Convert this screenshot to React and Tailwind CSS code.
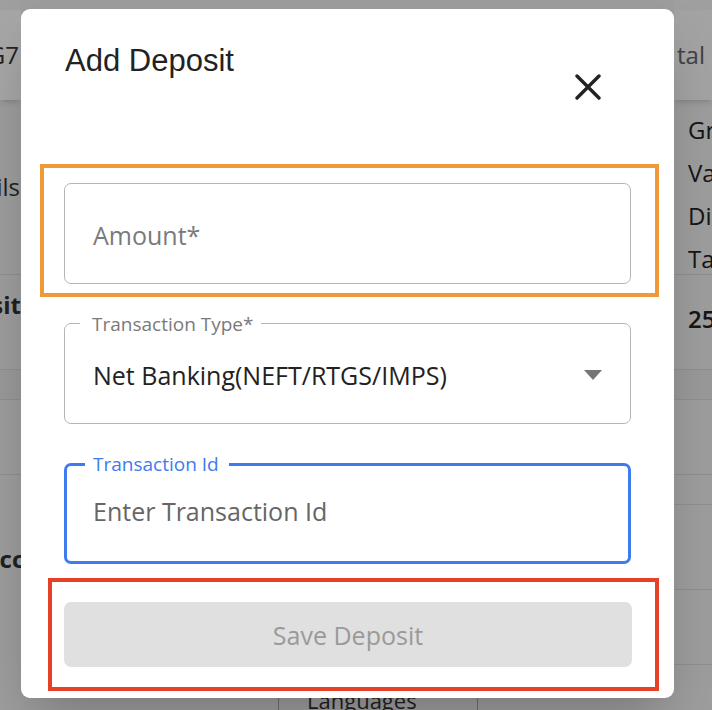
import React from 'react';

const sans = { fontFamily: '"Open Sans", "Noto Sans", sans-serif' };

function OutlinedField({ label, focused, children, right }) {
    const border = focused ? 'border-[3px] border-[#3d7bef]' : 'border border-[#b5b5b5]';
    return (
        <div className={`relative h-[101px] w-[567px] rounded-[7px] ${border} flex items-center justify-between`}>
            {label && (
                <span
                    className={
                        focused
                            ? 'absolute -top-[13px] left-[18px] bg-white pl-[8px] pr-[10px] text-[19px] leading-[22px] text-[#3d7bef]'
                            : 'absolute -top-[11px] left-[15px] bg-white pl-[12px] pr-[8px] text-[19px] leading-[22px] text-[#7a7a7a]'
                    }
                >
                    {label}
                </span>
            )}
            {children}
            {right}
        </div>
    );
}

export default function App() {
    return (
        <div className="relative w-[712px] h-[710px] overflow-hidden bg-[#f1f1f1]" style={sans}>
            {/* page behind the dialog */}
            <div className="flex justify-between h-full">
                <div className="w-[21px] flex flex-col text-[24px] text-[#333] overflow-hidden">
                    <div className="h-[10px] bg-[#f4f4f4]"></div>
                    <div className="h-[90px] bg-white shadow-md flex items-center justify-end pr-[2px] whitespace-nowrap">G7</div>
                    <div className="h-[175px] flex items-center justify-end pr-[1px] whitespace-nowrap border-b border-[#dcdcdc]">Details</div>
                    <div className="h-[95px] flex items-start pt-[12px] justify-end whitespace-nowrap font-bold border-b border-[#dcdcdc]">Deposit</div>
                    <div className="h-[30px] bg-[#ebebeb] border-b border-[#dcdcdc]"></div>
                    <div className="h-[75px] border-b border-[#dcdcdc]"></div>
                    <div className="h-[160px] flex items-start pt-[66px] whitespace-nowrap font-bold">
                        <span className="-ml-[17px]">Account</span>
                    </div>
                </div>
                <div className="w-[38px] flex flex-col text-[24px] text-[#222] overflow-hidden whitespace-nowrap">
                    <div className="h-[10px] bg-[#f4f4f4]"></div>
                    <div className="h-[90px] bg-[#fafafa] shadow-md flex items-center pl-[3px] text-[#666]">tal</div>
                    <div className="h-[175px] flex flex-col pl-[14px] pt-[8px] leading-[43px] border-b border-[#dcdcdc]">
                        <span>Gross</span>
                        <span>Value</span>
                        <span>Discount</span>
                        <span>Tax</span>
                    </div>
                    <div className="h-[95px] pl-[14px] pt-[30px] leading-[28px] font-semibold border-b border-[#dcdcdc]">2500</div>
                    <div className="h-[30px] bg-[#ebebeb] border-b border-[#dcdcdc]"></div>
                    <div className="h-[75px] border-b border-[#dcdcdc]"></div>
                    <div className="h-[30px] border-b border-[#dcdcdc]"></div>
                    <div className="h-[85px] border-b border-[#dcdcdc]"></div>
                    <div className="h-[75px] border-b border-[#dcdcdc]"></div>
                </div>
            </div>
            <div className="absolute left-[278px] top-[688px] h-[40px] w-[200px] rounded-[6px] border border-[#aaa] pl-[28px] text-[22px] leading-[22px] text-[#333]">
                Languages
            </div>

            {/* backdrop */}
            <div className="absolute inset-0 bg-black/[0.35]"></div>

            {/* dialog */}
            <div className="absolute left-[21px] top-[9px] w-[653px] h-[689px] bg-white rounded-[9px] shadow-2xl flex flex-col">
                <div className="flex justify-between items-start">
                    <h2
                        className="pl-[44px] pt-[34px] text-[31px] leading-[36px] text-[#222]"
                        style={{ fontFamily: '"Liberation Sans", Arial, sans-serif' }}
                    >
                        Add Deposit
                    </h2>
                    <button className="mt-[64px] mr-[72px] p-[1px] text-[#222]">
                        <svg width="26" height="26" viewBox="0 0 26 26">
                            <path d="M2 2 L24 24 M24 2 L2 24" stroke="currentColor" strokeWidth="3.4" strokeLinecap="round" />
                        </svg>
                    </button>
                </div>

                <div className="flex flex-col gap-[39px] pl-[43px] mt-[82px]">
                    <OutlinedField>
                        <span className="pl-[28px] pt-[4px] text-[25px] text-[#7a7a7a]">Amount*</span>
                    </OutlinedField>

                    <OutlinedField
                        label="Transaction Type*"
                        right={
                            <svg className="mr-[28px] mt-[2px]" width="18" height="10" viewBox="0 0 18 10">
                                <path d="M0 0 L18 0 L9 10 Z" fill="#757575" />
                            </svg>
                        }
                    >
                        <span className="pl-[28px] pt-[4px] text-[25px] text-[#222]">Net Banking(NEFT/RTGS/IMPS)</span>
                    </OutlinedField>

                    <OutlinedField label="Transaction Id" focused>
                        <span className="pl-[26px] pb-[4px] text-[25px] text-[#666]">Enter Transaction Id</span>
                    </OutlinedField>

                    <button className="-mt-[1px] h-[65px] w-[568px] rounded-[7px] bg-[#e0e0e0] pt-[3px] text-[25px] text-[#9a9a9a]">
                        Save Deposit
                    </button>
                </div>

                {/* highlight boxes */}
                <div className="absolute left-[19px] top-[155px] w-[619px] h-[133px] border-[4px] border-[#f0993a]"></div>
                <div className="absolute left-[27px] top-[569px] w-[611px] h-[113px] border-[4px] border-[#e64126]"></div>
            </div>
        </div>
    );
}
